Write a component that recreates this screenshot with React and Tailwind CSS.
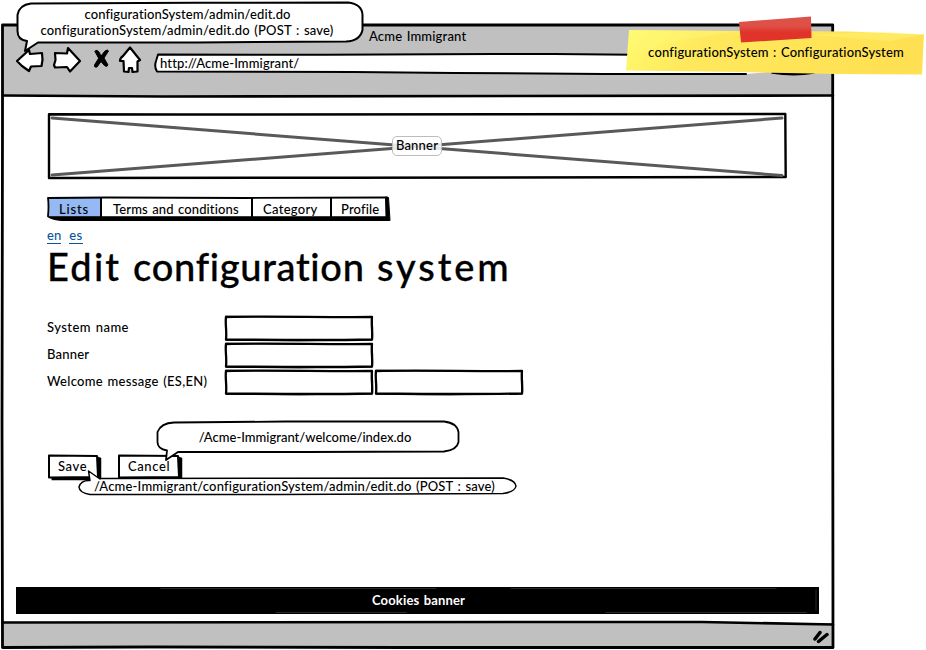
function Label({ children, className = 'tracking-[0.17px]' }) {
  return (
    <span className={`whitespace-nowrap text-[13px] leading-4 [word-spacing:1px] ${className}`}>
      {children}
    </span>
  )
}

// Hand-drawn lines sit over their box, in the box's own pixels
function Ink({ w, h, children }) {
  return (
    <svg
      className="pointer-events-none absolute top-0 left-0 overflow-visible"
      width={w}
      height={h}
      viewBox={`0 0 ${w} ${h}`}
      fill="none"
      stroke="#000"
      strokeLinecap="round"
      strokeLinejoin="round"
    >
      {children}
    </svg>
  )
}

function SketchInput() {
  return (
    <div className="relative h-[26px] w-[150px]">
      <Ink w={150} h={26}>
        <path d="M2 2 C50 1 100 2.500 148 2 C147 10 149 18 148 24.500 C100 25.500 50 25 2 24.500 C3 16 1 9 2 2Z" fill="#fff" strokeWidth="2.300" />
        <path d="M1.500 1.500 L70 1.800 L148 2.300 L148.500 13 L147.600 25 M2 25 L75 25.500 L148 24.500" strokeWidth="1.300" />
      </Ink>
    </div>
  )
}

function SketchButton({ children, w, className }) {
  return (
    <div className={`relative flex h-[26px] items-center ${className}`}>
      <Ink w={w} h={26}>
        <path d={`M5 23 H${w - 3} V3 L${w} 4 V26 L5 26Z`} fill="#000" strokeWidth="0.500" />
        <path d={`M2 1.500 L${w - 4} 2 L${w - 3} 23 L2 23.500Z`} fill="#fff" strokeWidth="2" />
      </Ink>
      <Label className="relative -mt-0.5 ml-[11px] tracking-[0.600px]">{children}</Label>
    </div>
  )
}

function Tab({ children, active, className, spacing }) {
  return (
    <div className={`flex h-full items-center pt-0.5 ${active ? 'bg-[#95b9f3]' : 'border-l-2 border-black bg-white'} ${className}`}>
      <Label className={spacing}>{children}</Label>
    </div>
  )
}

function Toolbar() {
  return (
    <svg className="h-[30px] w-[126px] shrink-0" viewBox="16 46 126 30" stroke="#000" strokeWidth="2.200" strokeLinejoin="round" strokeLinecap="round">
      <path d="M17 61 L29 50 L30 54 L42 53 L42.500 60 L41.500 66 L31 66.500 L29 71 L22 66Z" fill="#fff" />
      <path d="M55 53 L67 53.500 L68 48 L80 61 L70 71.500 L67 67 L55 67.500 L54 65 L55.500 60Z" fill="#fff" />
      <path d="M95 51 Q97 49 99 52 L101 56 L105 51 Q108 49 108.500 51 L104 58 L108 65 Q107 68 104 65 L101 61.500 L97 67 Q94 68 94.500 65 L98.500 58.500Z" fill="#000" strokeWidth="1" />
      <path d="M130 47.500 L140 60 L137.500 61.500 L137.500 71.500 L132.500 72 L132 68 L129 68 L128.500 72 L124 71.500 L123.500 61 L120 61 Q120 58 123 56Z" fill="#fff" />
    </svg>
  )
}

export default function App() {
  return (
    <div className="relative h-[650px] w-[926px] overflow-hidden bg-white pt-6 pl-0.5 font-['Lato','Noto_Sans',sans-serif] font-medium text-black [font-variant-ligatures:none]">
      {/* Browser window */}
      <div className="relative flex h-[625px] w-[832px] flex-col bg-white">
        <header className="flex h-[72px] shrink-0 flex-col bg-[#c0c0c0]">
          <div className="flex h-[22px] items-center pt-px pl-[367px]">
            <Label>Acme Immigrant</Label>
          </div>
          <div className="flex h-[30px] items-center gap-[12px] pl-[14px]">
            <Toolbar />
            <div className="relative flex h-5 w-[662px] items-center">
              <Ink w={662} h={20}>
                <path d="M3 3.500 L200 3.500 L660 3.500 V17 L592 23 L300 22 L3 20.500 Q1 16 1 10Z" fill="#fff" stroke="none" />
                <path d="M592 23 L450 23 L300 22 L200 21 L3 20.500 Q0 16 2 10 L4 3.500 L170 3.800 L340 3 L400 3 L480 3.800 L660 3.500" strokeWidth="2" />
                <path d="M618 22 Q640 25.500 660 22Z" fill="#000" strokeWidth="1.500" />
              </Ink>
              <Label className="relative mt-[3px] ml-[6px] tracking-[0.120px]">http://Acme-Immigrant/</Label>
            </div>
          </div>
        </header>

        <main className="flex grow flex-col items-start pt-4 pl-[45px]">
          <div className="relative flex h-[67px] w-[740px] items-center justify-center">
            <Ink w={740} h={67}>
              <path d="M2 2.300 L130 2.500 L738.300 2 L738.700 65 L300 65.700 L2 66Z" strokeWidth="2.400" />
              <path d="M5 6 L735 63.500 M5 63 L735 6" stroke="#595959" strokeWidth="3" />
            </Ink>
            <div className="relative flex h-5 w-[50px] items-center justify-center rounded-[5px] border border-[#bdbdbd] bg-white/85 pb-px">
              <Label className="tracking-[0.200px]">Banner</Label>
            </div>
          </div>

          <div className="relative mt-[17px] flex h-[25px] w-[344px] pt-0.5 pr-[5px] pb-1 pl-0.5">
            <div className="flex h-full grow">
              <Tab active className="w-[51px] pl-[10px]" spacing="tracking-[0.800px]">Lists</Tab>
              <Tab className="w-[151px] pl-[11px]" spacing="tracking-[0.120px]">Terms and conditions</Tab>
              <Tab className="w-[79px] pl-[10px]" spacing="tracking-[0.300px]">Category</Tab>
              <Tab className="grow pl-[9px]" spacing="tracking-[0.150px]">Profile</Tab>
            </div>
            <Ink w={344} h={25}>
              <path d="M1 20.800 L339 20.800 L338.500 1 L341.500 1.500 L343 24.500 L200 24.500 L60 24.500 L15 24.500 Q5 24 1 20.800Z" fill="#000" strokeWidth="1" />
              <path d="M1 20 Q2 10 1 2 L60 1.500 L200 2 L340 1.500" strokeWidth="1.800" />
            </Ink>
          </div>

          <nav className="mt-[7px] flex h-[17px] gap-2 text-[#08569c]">
            <a className="h-4 border-b border-[#08569c] whitespace-nowrap text-[13px] leading-[15px]">en</a>
            <a className="h-4 border-b border-[#08569c] whitespace-nowrap text-[13px] leading-[15px] tracking-[0.500px]">es</a>
          </nav>

          <h1 className="-mt-px h-[46px] whitespace-nowrap text-[38px] leading-[44px] [-webkit-text-stroke:0.300px_#000]">
            <span className="tracking-[2.200px]">Edit </span>
            <span className="tracking-[0.700px] [word-spacing:2px]">configuration </span>
            <span className="tracking-[2.900px]">system</span>
          </h1>

          <div className="mt-[25px] flex flex-col gap-px">
            <div className="flex items-center">
              <Label className="w-[177px] -mt-0.5 tracking-[0.450px]">System name</Label>
              <SketchInput />
            </div>
            <div className="flex items-center">
              <Label className="w-[177px] -mt-0.5 tracking-[0.200px]">Banner</Label>
              <SketchInput />
            </div>
            <div className="flex items-center">
              <Label className="w-[177px] -mt-0.5 tracking-[0.300px]">Welcome message (ES,EN)</Label>
              <SketchInput />
              <SketchInput />
            </div>
          </div>

          <div className="mt-[59px] flex gap-[17px]">
            <SketchButton w={54} className="w-[54px]">Save</SketchButton>
            <SketchButton w={65} className="-ml-px w-[65px]">Cancel</SketchButton>
          </div>

          <div className="relative mt-auto mb-[9px] -ml-[31px] flex h-[27px] w-[803px] items-center justify-center bg-black pb-0.5 pl-0.5 text-white">
            <Ink w={803} h={27}>
              <path d="M145 1.500 H420 M495 1.500 H760 M260 25.500 H390 M590 25.500 H790 M800 3 V23" stroke="#444" strokeWidth="0.600" />
            </Ink>
            <Label className="font-bold tracking-[0.150px]">Cookies banner</Label>
          </div>
        </main>

        <footer className="flex h-[26px] shrink-0 items-center justify-end bg-[#c0c0c0] pr-[5px]">
          <svg className="h-4 w-4" viewBox="0 0 16 16" stroke="#000" strokeLinecap="round">
            <path d="M2 11 L7 4.500 M5.500 13.500 L14 6.500" strokeWidth="3.500" />
          </svg>
        </footer>

        <Ink w={832} h={625}>
          <path d="M0.500 1 L830.700 1 L830.700 300 L831 623.500 L400 623.500 L150 622.800 L0.500 623.500 L0 400 L0.500 100Z" strokeWidth="2.800" />
          <path d="M1 71.500 L160 72.500 L831 71.500 M1 598.500 L560 598 L700 598 L831 600.500" strokeWidth="2.600" />
        </Ink>
      </div>

      {/* URL callout */}
      <div className="absolute top-px left-4 flex h-[54px] w-[349px] flex-col items-center pt-[5px]">
        <Ink w={349} h={54}>
          <path d="M15 2.500 L180 1.800 L332 1.500 Q346 3 346.500 14 L346.500 29 Q344 40 330 40.500 L180 41.500 L22 41.500 L9 50 L11 40 Q1.500 39 1.500 30 L1.500 14 Q3 4 15 2.500Z" fill="#fff" strokeWidth="2" />
        </Ink>
        <Label className="relative mr-[6px] tracking-[0.100px]">configurationSystem/admin/edit.do</Label>
        <Label className="relative mr-[7px] tracking-[0.200px]">configurationSystem/admin/edit.do (POST : save)</Label>
      </div>

      {/* Cancel callout */}
      <div className="absolute top-[420px] left-[156px] flex h-[42px] w-[305px] justify-center pt-[9px]">
        <Ink w={305} h={42}>
          <path d="M18 2.500 L130 1.500 L288 1.500 Q301 3 302.500 12 L302.500 22 Q301 30 288 31.500 L150 32 L22 32 L10 40 L11 30.500 Q1.500 29 1.500 22 L1.500 12 Q5 3 18 2.500Z" fill="#fff" strokeWidth="1.800" />
        </Ink>
        <Label className="relative mr-[7px] tracking-[0]">/Acme-Immigrant/welcome/index.do</Label>
      </div>

      {/* Save callout */}
      <div className="absolute top-[470px] left-[78px] flex h-[27px] w-[440px] pt-2 pl-4">
        <Ink w={440} h={27}>
          <path d="M23 8.500 L200 8.300 L425 8 Q437 10 438 16 Q437 22 425 23.500 L200 24.500 L12 24.500 Q1.500 23 1 17 Q3 10 12 10.500 L10.500 1 L22 9" fill="#fff" strokeWidth="1.500" />
        </Ink>
        <Label className="relative tracking-[0.180px]">/Acme-Immigrant/configurationSystem/admin/edit.do (POST : save)</Label>
      </div>

      {/* Sticky note */}
      <div className="absolute top-4 left-[626px] flex h-[60px] w-[298px] items-center justify-center pt-[11px] pl-0.5">
        <svg className="absolute inset-0" width="298" height="60" viewBox="626 16 298 60">
          <defs>
            <linearGradient id="note" x1="0" y1="0" x2="1" y2="0.150">
              <stop offset="0" stopColor="#fffd70" />
              <stop offset="0.300" stopColor="#ffe85d" />
              <stop offset="1" stopColor="#ffe052" />
            </linearGradient>
            <linearGradient id="tape" x1="0" y1="0" x2="0" y2="1">
              <stop offset="0.350" stopColor="#de5148" />
              <stop offset="0.600" stopColor="#e0342a" />
            </linearGradient>
          </defs>
          <path d="M629 30 L740 31 L850 31.500 L924 34.500 L922 74.500 L835 74 L740 72 L626 70.500Z" fill="url(#note)" />
          <path d="M812 35 L880 31.500 L924 34.500 L890 41 Z M629 30 L740 31 L680 40 L636 52Z" fill="#fff87a" opacity="0.400" />
          <path d="M739 22 L811 16.500 L811.500 38 L741 42.500Z" fill="url(#tape)" />
        </svg>
        <Label className="relative tracking-[0.170px]">configurationSystem : ConfigurationSystem</Label>
      </div>
    </div>
  )
}
